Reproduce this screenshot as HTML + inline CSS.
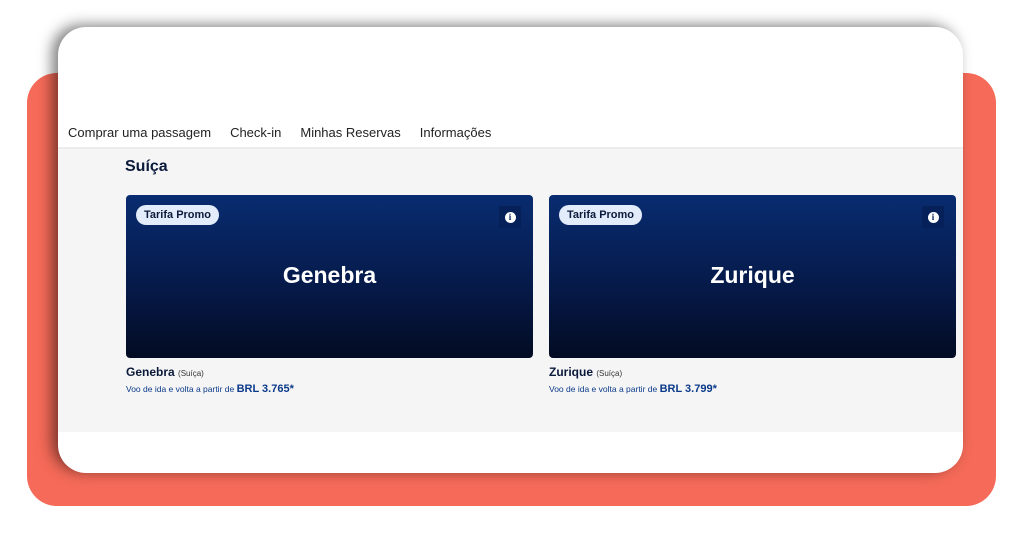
<!DOCTYPE html>
<html><head><style>
body{margin:0;width:1024px;height:536px;background:#fff;position:relative;overflow:hidden;font-family:"Liberation Sans",sans-serif}
.coral{position:absolute;left:27px;top:73px;width:969px;height:433px;background:#f56a58;border-radius:30px}
.card{position:absolute;left:58px;top:27px;width:905px;height:446px;background:#fff;border-radius:28px;overflow:hidden;box-shadow:-6px -2px 14px rgba(0,0,0,.5)}
.nav{position:absolute;top:98px;left:10px;font-size:13px;color:#222}
.nav span{margin-right:19px}
.grey{position:absolute;left:0;top:120px;width:905px;height:283px;background:#f5f5f5;border-top:2px solid #ececec}
h2{position:absolute;left:67px;top:9px;margin:0;font-size:16px;color:#0b1a3a}
.t{position:absolute;top:46px;width:407px;height:163px;border-radius:4px;background:linear-gradient(#082c70,#061a4a 55%,#020b22)}
.badge{position:absolute;left:10px;top:10px;background:#e3ecfb;color:#0b1a3a;font-size:11px;font-weight:bold;padding:4px 8px;border-radius:10px}
.i{position:absolute;right:12px;top:11px;width:22px;height:22px;background:#06205a;display:flex;align-items:center;justify-content:center}
.i b{width:11px;height:11px;border-radius:50%;background:#fff;color:#06205a;font-size:9px;line-height:11px;text-align:center;font-family:"Liberation Serif",serif}
.city{position:absolute;left:0;right:0;top:67px;text-align:center;color:#fff;font-size:23px;font-weight:bold}
.n{position:absolute;top:216px;font-size:12px;font-weight:bold;color:#0b1a3a}
.n small{font-weight:normal;font-size:8px;color:#333}
.p{position:absolute;top:234px;font-size:8.5px;color:#0b3a8a}
.p b{font-size:11px}
</style></head><body>
<div class="coral"></div>
<div class="card">
<div class="nav"><span>Comprar uma passagem</span><span>Check-in</span><span>Minhas Reservas</span><span>Informações</span></div>
<div class="grey">
<h2>Suíça</h2>
<div class="t" style="left:68px"><div class="badge">Tarifa Promo</div><div class="i"><b>i</b></div><div class="city">Genebra</div></div>
<div class="t" style="left:491px"><div class="badge">Tarifa Promo</div><div class="i"><b>i</b></div><div class="city">Zurique</div></div>
<div class="n" style="left:68px">Genebra <small>(Suíça)</small></div>
<div class="p" style="left:68px">Voo de ida e volta a partir de <b>BRL 3.765*</b></div>
<div class="n" style="left:491px">Zurique <small>(Suíça)</small></div>
<div class="p" style="left:491px">Voo de ida e volta a partir de <b>BRL 3.799*</b></div>
</div>
</div>
</body></html>
